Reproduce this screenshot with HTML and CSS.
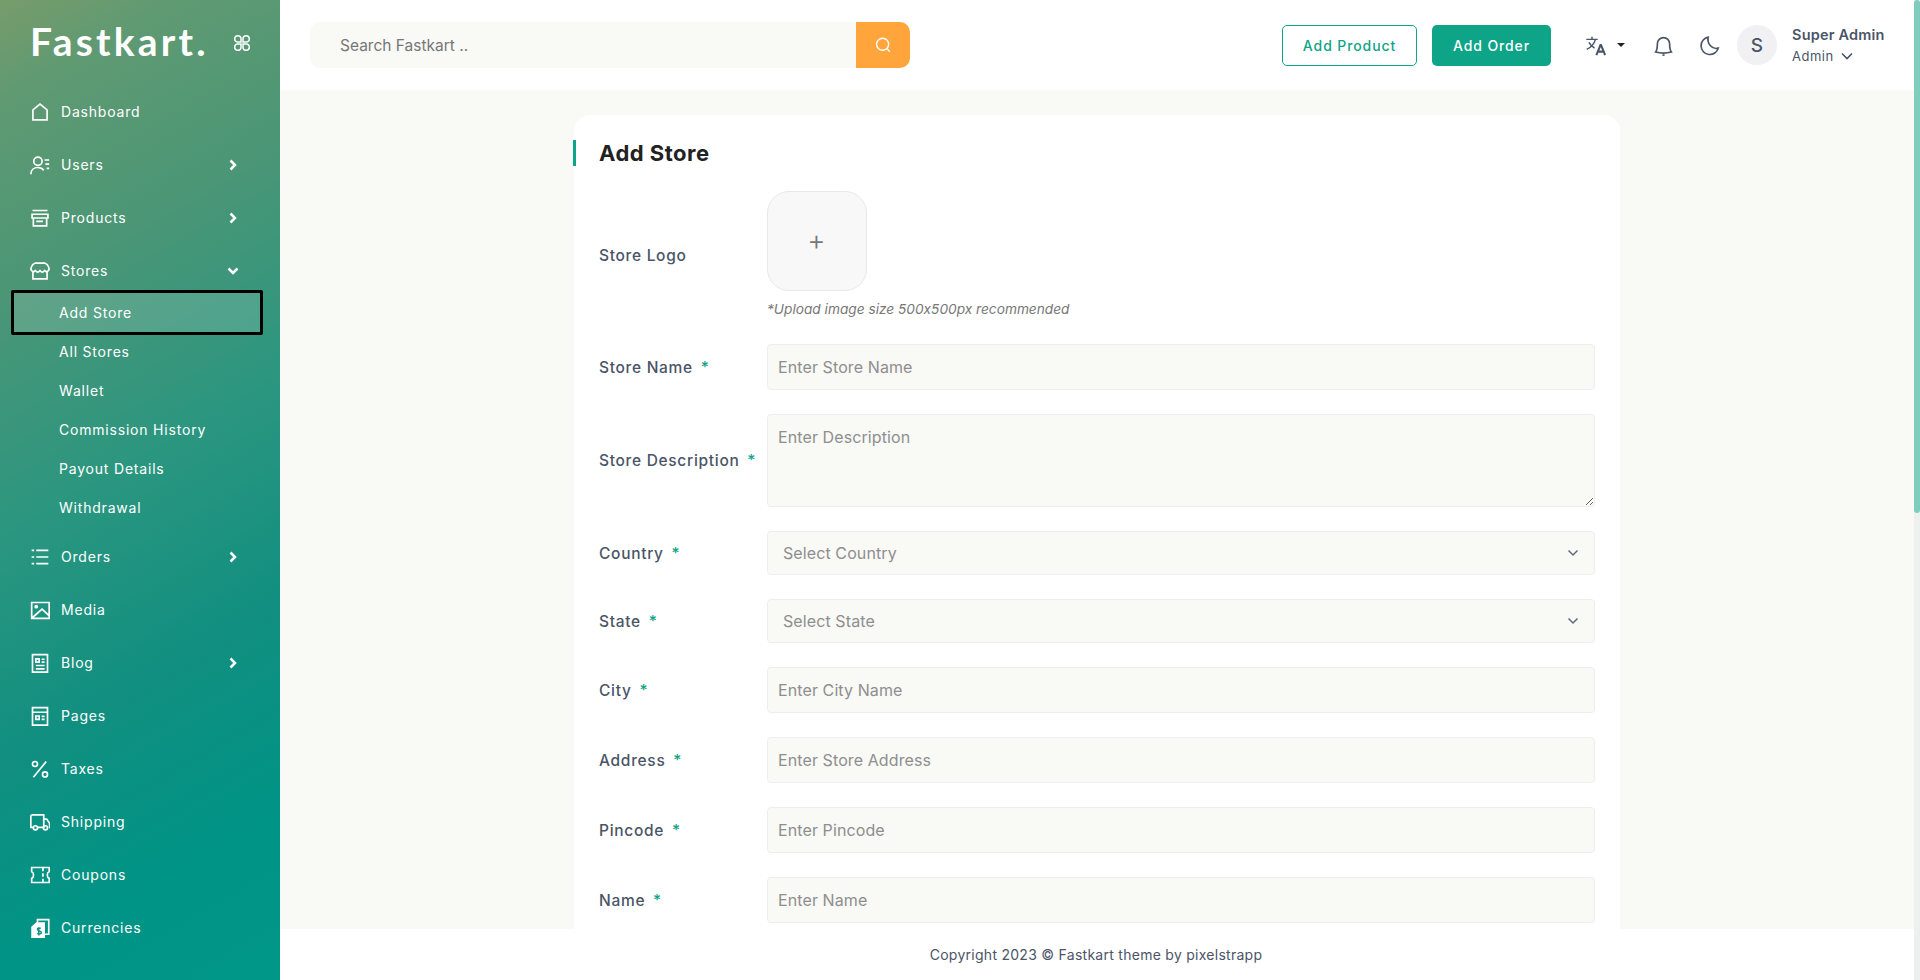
FILE: index.html
```html
<!DOCTYPE html>
<html lang="en">
<head>
<meta charset="utf-8">
<title>Add Store - Fastkart</title>
<link rel="stylesheet" href="styles.css">
</head>
<body>
<div class="app">
  <aside class="sidebar">
    <div class="brand">
      <span class="logo">Fastkart.</span>
      <svg class="brand-icon" viewBox="0 0 18 18"><path d="M8 8H4.200A3.200 3.200 0 1 1 8 4.200zM10 8V4.200A3.200 3.200 0 1 1 13.800 8zM8 10v3.800A3.200 3.200 0 1 1 4.200 10zM10 10h3.800A3.200 3.200 0 1 1 10 13.800z"/></svg>
    </div>
    <nav class="nav">
      <a class="nav-item"><svg class="ni" viewBox="0 0 24 24"><path d="M3.500 21.500V9.500L12 2.500l8.500 7v12z"/></svg><span>Dashboard</span></a>
      <a class="nav-item"><svg class="ni" viewBox="0 0 24 24"><circle cx="9.500" cy="7.500" r="5"/><path d="M1 23c0-5 3.500-8 8.500-8 3 0 5.500 1.200 7 3.500M17.500 6H23M18.500 11H23M20 16h3"/></svg><span>Users</span><svg class="chev" viewBox="0 0 12 12"><path d="M3.500 1.500 8 6l-4.500 4.500"/></svg></a>
      <a class="nav-item"><svg class="ni" viewBox="0 0 24 24"><path d="M3 3h18M2.500 7.500h19v4.500h-19zM4 12v9.500h16V12M7.500 16h8"/></svg><span>Products</span><svg class="chev" viewBox="0 0 12 12"><path d="M3.500 1.500 8 6l-4.500 4.500"/></svg></a>
      <a class="nav-item"><svg class="ni" viewBox="0 0 24 24"><path d="M6.500 2.500h11c3 1 5 4 5.500 7.500-1 3-3.500 3.500-5.500 1.500-2 2.500-3.500 2.500-5.500 0-2 2.500-3.500 2.500-5.500 0C4.500 13.500 2 13 1 10c.5-3.500 2.500-6.500 5.500-7.500zM3.500 12.500v9h17v-9"/></svg><span>Stores</span><svg class="chev" viewBox="0 0 12 12"><path d="M1.500 3.500 6 8l4.500-4.500"/></svg></a>
      <div class="subnav">
        <a class="sub-item active">Add Store</a>
        <a class="sub-item">All Stores</a>
        <a class="sub-item">Wallet</a>
        <a class="sub-item">Commission History</a>
        <a class="sub-item">Payout Details</a>
        <a class="sub-item">Withdrawal</a>
      </div>
      <a class="nav-item"><svg class="ni" viewBox="0 0 24 24"><path d="M7.500 4h14.500M7.500 12h14.500M7.500 20h14.500M2 4h3M2 12h3M2 20h3"/></svg><span>Orders</span><svg class="chev" viewBox="0 0 12 12"><path d="M3.500 1.500 8 6l-4.500 4.500"/></svg></a>
      <a class="nav-item"><svg class="ni" viewBox="0 0 24 24"><path d="M2 3h21v19H2zM3 21l11.500-10 8 7.500"/><circle cx="7.500" cy="8" r="1.300"/></svg><span>Media</span></a>
      <a class="nav-item"><svg class="ni" viewBox="0 0 24 24"><path d="M3 2h18v21H3zM7 7h4v4H7zM14 7.500h3.500M14 11h3.500M7 15h10.500M7 19h10.500"/></svg><span>Blog</span><svg class="chev" viewBox="0 0 12 12"><path d="M3.500 1.500 8 6l-4.500 4.500"/></svg></a>
      <a class="nav-item"><svg class="ni" viewBox="0 0 24 24"><path d="M3 2h18v21H3zM3 7.500h18M7 12h4v4H7zM14 12.500h3.500M14 16h3.500"/></svg><span>Pages</span></a>
      <a class="nav-item"><svg class="ni" viewBox="0 0 24 24"><circle cx="6" cy="6" r="3"/><circle cx="18" cy="18.500" r="3"/><path d="M19.500 3 4 22"/></svg><span>Taxes</span></a>
      <a class="nav-item"><svg class="ni" viewBox="0 0 24 24"><path d="M3.500 18.500H1V5.500a2 2 0 0 1 2-2h13.500v15H9M16.500 8.500H20l3.500 5v5h-1M16.500 18.500H14"/><circle cx="6.500" cy="19" r="2.500"/><circle cx="18.500" cy="19" r="2.500"/></svg><span>Shipping</span></a>
      <a class="nav-item"><svg class="ni" viewBox="0 0 24 24"><path d="M2 3h21v5c-3 1-3 7 0 8v5H2v-5c3-1 3-7 0-8zM15.500 3v4.500M15.500 16.500V21M15.500 10v4"/></svg><span>Coupons</span></a>
      <a class="nav-item"><svg class="ni" viewBox="0 0 24 24"><path d="M9 6V2h13.500v17.500H18"/><path class="solid" d="M8 6h9v17H2.500V11z"/><path class="cut" d="M13 12.500c-3-1.500-5 .5-3.500 2 1 1 3.500 1 4 2.500.5 2-2.500 3-5 1.500M10.500 11v10"/></svg><span>Currencies</span></a>
    </nav>
  </aside>
  <div class="main">
    <header class="topbar">
      <div class="search">
        <input class="search-input" type="text" placeholder="Search Fastkart ..">
        <button class="search-btn" type="button"><svg viewBox="0 0 24 24"><circle cx="11.500" cy="11" r="8"/><path d="m17.500 17 3.500 4"/></svg></button>
      </div>
      <div class="top-actions">
        <button class="btn btn-outline" type="button">Add Product</button>
        <button class="btn btn-solid" type="button">Add Order</button>
        <div class="lang">
          <svg class="lang-icon" viewBox="0 0 24 24"><path d="M1.500 5h13M8 2v3M12 5C10.500 10 7 14 2 16.500M4.500 8.500c1.500 3 3.500 5 6.500 6.500"/><path class="lang-a" d="m13 23 4.700-11.500h.6L23 23M14.800 19h6.400"/></svg>
          <span class="caret"></span>
        </div>
        <svg class="top-icon bell" viewBox="0 0 24 24"><path d="M3 19.500c2-2.500 2-5 2-9.500a7 7 0 0 1 14 0c0 4.500 0 7 2 9.500-5 1.300-13 1.300-18 0z"/><path class="bell-dot" d="M10.800 23h2.400"/></svg>
        <svg class="top-icon moon" viewBox="0 0 24 24"><path d="M10.500 2.500A10 10 0 1 0 22 15c-7 2-13-5-11.500-12.500z"/></svg>
        <div class="avatar">S</div>
        <div class="user">
          <div class="user-name">Super Admin</div>
          <div class="user-role">Admin <svg viewBox="0 0 12 12"><path d="M1 3.500 6 8.500l5-5"/></svg></div>
        </div>
      </div>
    </header>
    <main class="content">
      <section class="card">
        <h1 class="card-title">Add Store</h1>
        <form class="form">
          <div class="row">
            <label class="label">Store Logo</label>
            <div>
              <div class="upload">+</div>
              <p class="help">*Upload image size 500x500px recommended</p>
            </div>
          </div>
          <div class="row">
            <label class="label">Store Name <span class="req">*</span></label>
            <input class="field" type="text" placeholder="Enter Store Name">
          </div>
          <div class="row">
            <label class="label">Store Description <span class="req">*</span></label>
            <textarea class="field area" placeholder="Enter Description"></textarea>
          </div>
          <div class="row">
            <label class="label">Country <span class="req">*</span></label>
            <div class="select-wrap">
              <select class="field select"><option>Select Country</option></select>
              <svg class="select-chev" viewBox="0 0 12 12"><path d="M1.500 3.500 6 8l4.500-4.500"/></svg>
            </div>
          </div>
          <div class="row">
            <label class="label">State <span class="req">*</span></label>
            <div class="select-wrap">
              <select class="field select"><option>Select State</option></select>
              <svg class="select-chev" viewBox="0 0 12 12"><path d="M1.500 3.500 6 8l4.500-4.500"/></svg>
            </div>
          </div>
          <div class="row">
            <label class="label">City <span class="req">*</span></label>
            <input class="field" type="text" placeholder="Enter City Name">
          </div>
          <div class="row">
            <label class="label">Address <span class="req">*</span></label>
            <input class="field" type="text" placeholder="Enter Store Address">
          </div>
          <div class="row">
            <label class="label">Pincode <span class="req">*</span></label>
            <input class="field" type="text" placeholder="Enter Pincode">
          </div>
          <div class="row">
            <label class="label">Name <span class="req">*</span></label>
            <input class="field" type="text" placeholder="Enter Name">
          </div>
        </form>
      </section>
    </main>
    <footer class="footer">Copyright 2023 © Fastkart theme by pixelstrapp</footer>
  </div>
  <div class="scrollbar"><div class="thumb"></div></div>
</div>
</body>
</html>
```
FILE: styles.css
```css
* { box-sizing: border-box; }
html, body { margin: 0; height: 100%; overflow: hidden; }
body { font-family: "Inter", "Liberation Sans", sans-serif; font-feature-settings: "calt" 0; color: #4a5568; background: #f9f9f6; }
.app { display: flex; height: 980px; }

.sidebar { width: 280px; flex: none; height: 100%; color: #fff; background: linear-gradient(150deg, #789c6a 0%, #5f9a72 9%, #4a9676 27%, #2a9680 48%, #118f80 67%, #009486 85%, #009688 100%); }
.brand { height: 85px; display: flex; align-items: flex-start; padding: 21px 0 0 30px; }
.logo { font-family: "Lato", sans-serif; font-weight: 700; font-size: 39px; line-height: 40px; letter-spacing: 3.200px; }
.brand-icon { width: 18px; height: 18px; margin: 13px 0 0 24px; fill: none; stroke: #fff; stroke-width: 1.500; }
.nav { display: flex; flex-direction: column; }
.nav-item { height: 53px; flex: none; display: flex; align-items: center; padding-left: 30px; font-size: 14px; letter-spacing: .8px; }
.nav-item .ni { width: 20px; height: 20px; margin-right: 11px; flex: none; fill: none; stroke: #fff; stroke-width: 2; }
.nav-item .ni .solid { fill: #fff; }
.nav-item .ni .cut { stroke: #159182; stroke-width: 1.800; }
.chev { width: 12px; height: 12px; margin-left: auto; margin-right: 41px; fill: none; stroke: #fff; stroke-width: 2.500; }
.subnav { display: flex; flex-direction: column; margin: -7px 0 3px; }
.sub-item { height: 39px; display: flex; align-items: center; padding-left: 59px; font-size: 14px; letter-spacing: .8px; }
.sub-item.active { width: 252px; height: 45px; margin: 0 0 -3px 11px; padding-left: 45px; border: 3px solid #000; border-radius: 2px; background: rgba(255,255,255,.13); }

.main { flex: 1; min-width: 0; display: flex; flex-direction: column; }
.topbar { height: 90px; flex: none; background: #fff; display: flex; align-items: center; justify-content: space-between; padding: 0 29px 0 30px; }
.search { width: 600px; height: 46px; display: flex; border-radius: 10px; overflow: hidden; background: #f9f9f6; }
.search-input { flex: 1; min-width: 0; border: 0; outline: 0; background: transparent; padding: 0 0 0 30px; font-family: "Inter", sans-serif; font-size: 15.500px; color: #777; }
.search-input::placeholder { color: #777; opacity: 1; }
.search-btn { width: 54px; border: 0; padding: 0; background: #ffa53b; display: flex; align-items: center; justify-content: center; }
.search-btn svg { width: 18px; height: 18px; fill: none; stroke: #fff; stroke-width: 1.800; }
.top-actions { display: flex; align-items: center; }
.btn { height: 41px; border-radius: 5px; font-family: "Inter", sans-serif; font-weight: 500; font-size: 14px; letter-spacing: .9px; }
.btn-outline { width: 135px; border: 1px solid #0da487; background: #fff; color: #0da487; }
.btn-solid { width: 119px; margin-left: 15px; border: 0; background: #0da487; color: #fff; }
.lang { display: flex; align-items: center; margin-left: 34px; }
.lang-icon { width: 21px; height: 21px; fill: none; stroke: #4a5568; stroke-width: 1.700; }
.lang-a { stroke-width: 2.300; }
.caret { margin-left: 11px; border: 4px solid transparent; border-top-color: #222; border-bottom: 0; }
.top-icon { width: 21px; height: 21px; fill: none; stroke: #4a5568; stroke-width: 1.900; flex: none; }
.bell { margin-left: 28px; }
.moon { margin-left: 25px; }
.avatar { width: 40px; height: 40px; margin-left: 17px; border-radius: 50%; background: #f1f1f3; display: flex; align-items: center; justify-content: center; font-size: 19px; font-weight: 500; color: #4a5568; }
.user { margin-left: 15px; width: 93px; }
.user-name { font-weight: 600; font-size: 14.500px; line-height: 20px; letter-spacing: .2px; white-space: nowrap; }
.user-role { font-size: 13px; line-height: 20px; margin-top: 1px; letter-spacing: .5px; display: flex; align-items: center; gap: 7px; }
.user-role svg { width: 12px; height: 12px; fill: none; stroke: #4a5568; stroke-width: 1.600; }

.content { flex: 1; min-height: 0; overflow: hidden; padding: 25px 294px 0; }
.card { width: 1046px; background: #fff; border-radius: 16px; padding: 25px 26px 30px 25px; position: relative; }
.card::before { content: ""; position: absolute; left: -1px; top: 25px; width: 3px; height: 26px; background: #0da487; }
.card-title { margin: 0 0 25px; font-size: 22px; line-height: 26px; font-weight: 700; color: #222; letter-spacing: .5px; }
.form { display: flex; flex-direction: column; gap: 24px; }
.row { display: grid; grid-template-columns: 168px 828px; align-items: center; }
.label { font-size: 15.500px; font-weight: 500; color: #4a5568; letter-spacing: .7px; white-space: nowrap; }
.req { color: #0da487; margin-left: 3px; }
.upload { width: 100px; height: 100px; padding: 0 1px 2px 0; border: 1px solid #e9e9e9; border-radius: 22px; background: #f8f8f8; display: flex; align-items: center; justify-content: center; font-size: 28px; font-weight: 300; color: #777; }
.help { margin: 9px 0 0; height: 20px; font-size: 13.700px; line-height: 19px; font-style: italic; color: #777; }
.field { display: block; width: 828px; height: 46px; border: 1px solid #eee; border-radius: 4px; background: #f9f9f6; padding: 0 10px; font-family: "Inter", sans-serif; font-size: 16px; letter-spacing: .1px; color: #8e8e8e; outline: 0; }
.field::placeholder { color: #8e8e8e; opacity: 1; }
.area { height: 93px; padding-top: 12px; }
.select-wrap { position: relative; }
.select { height: 44px; padding-left: 15px; appearance: none; }
.select-chev { position: absolute; right: 16px; top: 16px; width: 12px; height: 12px; fill: none; stroke: #5f6b7a; stroke-width: 1.500; }
.footer { height: 51px; flex: none; background: #fff; display: flex; align-items: center; justify-content: center; font-size: 14px; letter-spacing: .27px; color: #4a5568; padding-right: 2px; }
.scrollbar { width: 6px; flex: none; height: 100%; background: #ecf1f0; }
.thumb { height: 513px; border-radius: 3px; background: #7fcdbc; }
```
